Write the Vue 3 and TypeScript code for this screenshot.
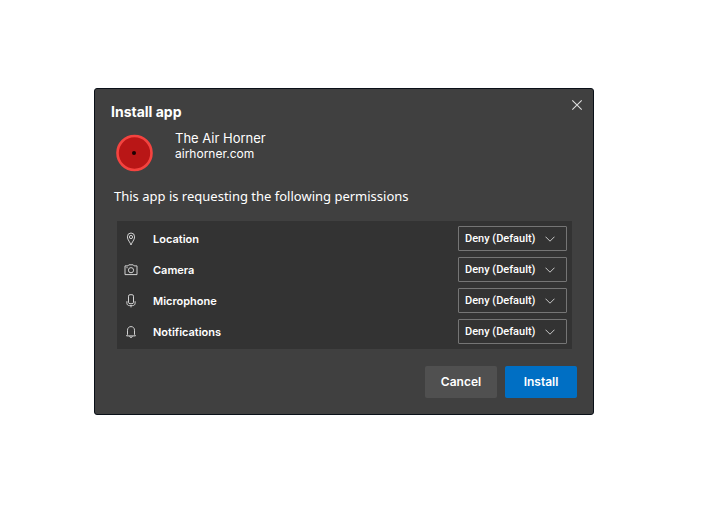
<script setup lang="ts">
import { reactive } from 'vue'

type Permission = { id: string; label: string }

const permissions: Permission[] = [
  { id: 'location', label: 'Location' },
  { id: 'camera', label: 'Camera' },
  { id: 'microphone', label: 'Microphone' },
  { id: 'notifications', label: 'Notifications' },
]

const choices = reactive<Record<string, string>>({
  location: 'deny',
  camera: 'deny',
  microphone: 'deny',
  notifications: 'deny',
})
</script>

<template>
  <main class="page">
    <section class="dialog" role="dialog" aria-labelledby="dialog-title">
      <header class="head">
        <h1 id="dialog-title" class="title">Install app</h1>
        <button class="close" type="button" aria-label="Close">
          <svg width="12" height="12" viewBox="0 0 12 12" fill="none" stroke="#dedede" stroke-width="1.1">
            <path d="M1.3 1.3L10.7 10.7M10.7 1.3L1.3 10.7" />
          </svg>
        </button>
      </header>

      <div class="app">
        <svg class="logo" width="38" height="38" viewBox="0 0 38 38">
          <circle cx="18.5" cy="19" r="17" fill="#b91616" stroke="#f4433f" stroke-width="2.6" />
          <circle cx="18" cy="19" r="2" fill="#1c0202" />
        </svg>
        <div class="names">
          <p class="name">The Air Horner</p>
          <p class="name host">airhorner.com</p>
        </div>
      </div>

      <p class="request">This app is requesting the following permissions</p>

      <div class="panel">
        <div v-for="item in permissions" :key="item.id" class="row">
          <svg class="icon" width="14" height="14" viewBox="0 0 14 14" fill="none" stroke="#d2d2d2" stroke-width="1">
            <template v-if="item.id === 'location'">
              <path d="M7 13C6.3 10.4 3.4 7.9 3.4 4.9A3.6 3.9 0 0 1 10.6 4.9C10.6 7.9 7.7 10.4 7 13Z" />
              <circle cx="7" cy="5" r="1.6" />
            </template>
            <template v-else-if="item.id === 'camera'">
              <path d="M1 2.9H3.9L4.8 1.8H9.2L10.1 2.9H13V11.6H1Z" />
              <circle cx="7" cy="7.2" r="2.6" />
              <path d="M2.4 4.7H3.6" />
            </template>
            <template v-else-if="item.id === 'microphone'">
              <rect x="4.5" y="0.7" width="5" height="9" rx="1.5" />
              <path d="M2.9 7.2V9.2C2.9 10.7 4 11.6 5.4 11.6H8.6C10 11.6 11.1 10.7 11.1 9.2V7.2M7 11.6V13.4" />
            </template>
            <template v-else>
              <path d="M2.6 10.9H11.4L10.5 9.4V5.2C10.5 3 9 1.6 7 1.6S3.5 3 3.5 5.2V9.4Z" stroke-linejoin="round" />
              <path d="M5.6 11.2C5.8 12.9 8.2 12.9 8.4 11.2" />
            </template>
          </svg>
          <label class="label" :for="item.id">{{ item.label }}</label>
          <div class="choice">
            <select :id="item.id" v-model="choices[item.id]" class="select">
              <option value="deny">Deny (Default)</option>
              <option value="allow">Allow</option>
            </select>
            <svg class="chevron" width="10" height="6" viewBox="0 0 10 6" fill="none" stroke="#c8c8c8" stroke-width="1">
              <path d="M0.5 0.7L5 5.2L9.5 0.7" />
            </svg>
          </div>
        </div>
      </div>

      <footer class="actions">
        <button class="button" type="button">Cancel</button>
        <button class="button primary" type="button">Install</button>
      </footer>
    </section>
  </main>
</template>

<style>
body {
  background: #fff;
}
</style>

<style scoped>
.page {
  padding: 88px 129px 32px 94px;
  font-family: Inter, 'Liberation Sans', sans-serif;
  color: #fff;
}

.dialog {
  box-sizing: border-box;
  padding: 12px 16px 16px;
  background: #404040;
  border: 1px solid #0a1018;
  border-radius: 3px;
}

.head {
  display: flex;
  align-items: flex-start;
  justify-content: space-between;
}

.title {
  margin: 0;
  font-size: 14px;
  line-height: 22px;
  font-weight: 700;
}

.close {
  display: flex;
  margin: -4px -8px 0 0;
  padding: 2px;
  border: 0;
  background: none;
}

.app {
  display: flex;
  gap: 21px;
  padding: 8px 0 0 5px;
}

.logo {
  margin-top: 3px;
}

.names {
  display: flex;
  flex-direction: column;
}

.name {
  margin: 0;
  font-size: 13px;
  line-height: 15px;
}

.host {
  font-size: 12px;
}

.request {
  margin: 14px 3px 15px;
  font-family: 'Noto Sans', 'Open Sans', sans-serif;
  font-size: 13px;
  line-height: 20px;
}

.panel {
  display: grid;
  gap: 6px;
  margin: 0 5px 0 6px;
  padding: 5px 5px 5px 7px;
  background: #333;
}

.row {
  display: flex;
  align-items: center;
}

.label {
  flex: 1;
  margin-left: 15px;
  font-size: 11px;
  font-weight: 600;
}

.choice {
  display: grid;
  align-items: center;
  width: 109px;
}

.select {
  grid-area: 1 / 1;
  appearance: none;
  box-sizing: border-box;
  width: 100%;
  height: 25px;
  margin: 0;
  padding: 0 6px;
  border: 1px solid #757575;
  border-radius: 1px;
  background: transparent;
  color: #fff;
  font-family: Roboto, 'Open Sans', sans-serif;
  font-size: 11px;
  font-weight: 500;
}

.select option {
  background: #333;
}

.chevron {
  grid-area: 1 / 1;
  justify-self: end;
  margin-right: 12px;
  pointer-events: none;
}

.actions {
  display: flex;
  justify-content: flex-end;
  gap: 8px;
  padding-top: 17px;
}

.button {
  width: 72px;
  height: 32px;
  padding: 0 0 2px;
  border: 0;
  border-radius: 2px;
  background: #505050;
  color: #fff;
  font-family: inherit;
  font-size: 12px;
  font-weight: 600;
}

.primary {
  background: #006fc4;
}
</style>
